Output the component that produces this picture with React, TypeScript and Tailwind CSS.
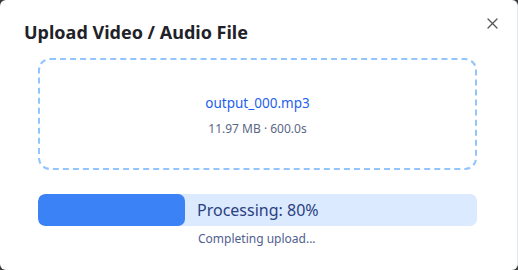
import React from "react";

export default function App() {
  return (
    <div className="w-[518px] h-[270px] bg-[#3a3a3a] overflow-hidden" style={{ fontFamily: '"Noto Sans", "Open Sans", sans-serif' }}>
      <div className="relative w-full h-full bg-white rounded-[6px] border-r border-[#e5e7eb]">
        <button className="absolute right-[18px] top-[16px] w-[14px] h-[14px] flex items-center justify-center text-[#555]">
          <svg width="11" height="11" viewBox="0 0 11 11" fill="none" stroke="currentColor" strokeWidth="1.3" strokeLinecap="round">
            <path d="M1 1L10 10M10 1L1 10" />
          </svg>
        </button>
        <div className="pt-[18px] pl-[24px]">
          <h2 className="text-[18px] font-bold text-[#1f2329] leading-[28px]">Upload Video / Audio File</h2>
        </div>
        <div className="pl-[38px] pr-[40px] pt-[12px]">
          <div className="h-[112px] border-2 border-dashed border-[#93c5fd] rounded-[12px] flex flex-col items-center justify-center">
            <div className="text-[13.5px] text-[#1f5fef] leading-[20px] mt-[2px]">output_000.mp3</div>
            <div className="text-[12px] text-[#5b6785] leading-[16px] mt-[8px]">11.97 MB · 600.0s</div>
          </div>
          <div className="mt-[24px] h-[32px] rounded-[7px] bg-[#dbeafe] flex items-center overflow-hidden">
            <div className="w-[147px] h-full bg-[#3b82f6] rounded-[7px]" />
            <span className="ml-[12px] text-[16px] text-[#2b3f82]">Processing: 80%</span>
          </div>
          <div className="mt-[5px] pl-[160px] text-[12px] text-[#50608f] leading-[16px]">Completing upload...</div>
        </div>
      </div>
    </div>
  );
}
